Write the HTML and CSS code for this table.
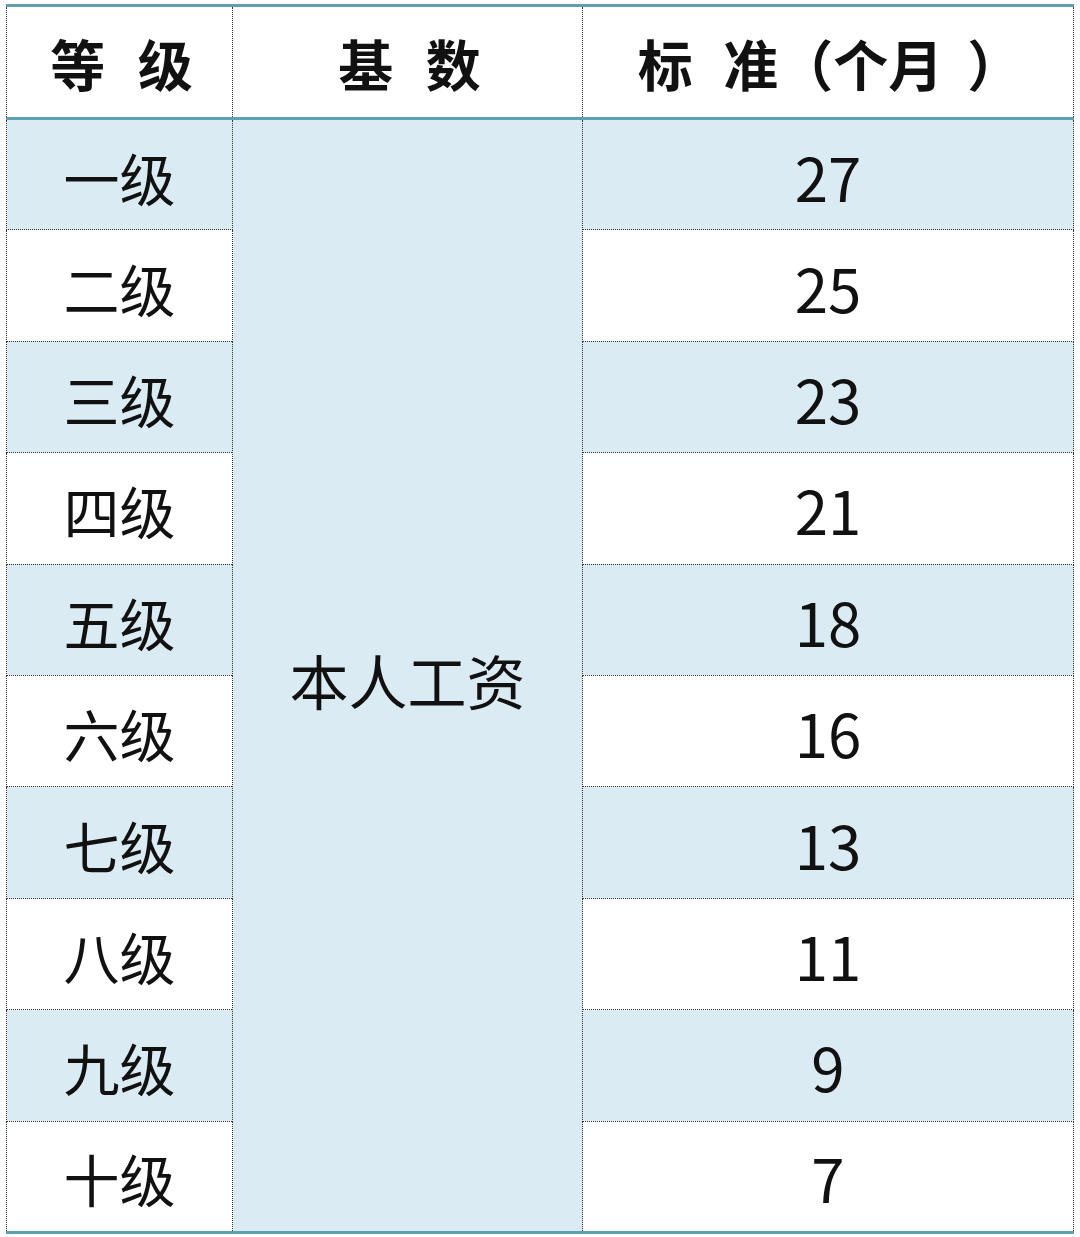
FILE: index.html
```html
<!DOCTYPE html>
<html lang="zh-CN">
<head>
<meta charset="utf-8">
<title>等级标准</title>
<link rel="stylesheet" href="styles.css">
</head>
<body>
<table class="grade-table">
  <colgroup>
    <col class="c1">
    <col class="c2">
    <col class="c3">
  </colgroup>
  <thead>
    <tr>
      <th class="h-grade">等 级</th>
      <th class="h-base">基 数</th>
      <th class="h-std">标 准（个月<span class="close">）</span></th>
    </tr>
  </thead>
  <tbody>
    <tr class="odd"><td class="grade">一级</td><td class="base" rowspan="10">本人工资</td><td class="num">27</td></tr>
    <tr class="even"><td class="grade">二级</td><td class="num">25</td></tr>
    <tr class="odd"><td class="grade">三级</td><td class="num">23</td></tr>
    <tr class="even"><td class="grade">四级</td><td class="num">21</td></tr>
    <tr class="odd"><td class="grade">五级</td><td class="num">18</td></tr>
    <tr class="even"><td class="grade">六级</td><td class="num">16</td></tr>
    <tr class="odd"><td class="grade">七级</td><td class="num">13</td></tr>
    <tr class="even"><td class="grade">八级</td><td class="num">11</td></tr>
    <tr class="odd"><td class="grade">九级</td><td class="num">9</td></tr>
    <tr class="even last"><td class="grade">十级</td><td class="num">7</td></tr>
  </tbody>
</table>
</body>
</html>
```
FILE: styles.css
```css
html, body {
  margin: 0;
  padding: 0;
  background: #ffffff;
}
body {
  padding: 4px 0 0 6px;
  font-family: "Noto Sans CJK SC", "Noto Sans", sans-serif;
  color: #111;
}
.grade-table {
  border-collapse: collapse;
  table-layout: fixed;
  width: 1067px;
  border-top: 3px solid #5e9fb3;
  border-bottom: 3px solid #5e9fb3;
}
.c1 { width: 226px; }
.c2 { width: 350px; }
.c3 { width: 491px; }
th, td {
  padding: 0;
  text-align: center;
  vertical-align: middle;
  border-left: 1px dotted #333;
  border-right: 1px dotted #333;
}
thead th {
  height: 110px;
  font-weight: 700;
  font-size: 55px;
  line-height: 1;
  border-bottom: 3px solid #5e9fb3;
  background: #fff;
}
.h-grade, .h-base { word-spacing: 20px; padding-left: 4px; }
.h-std { word-spacing: 18px; padding-left: 4px; }
.close { margin-left: 24px; }
tbody tr { height: 111.4px; }
tbody td {
  font-size: 56px;
  font-weight: 400;
  line-height: 1;
  border-bottom: 1px dotted #333;
}
tbody tr.odd td { background: #daebf3; }
tbody tr.even td { background: #ffffff; }
tbody td.base {
  background: #daebf3 !important;
  font-size: 59px;
  border-bottom: none;
  padding-top: 8px;
}
tbody tr.last td { border-bottom: none; }
.grade { padding-top: 4px; }
.num { font-size: 60px; padding-top: 2px; }
```
